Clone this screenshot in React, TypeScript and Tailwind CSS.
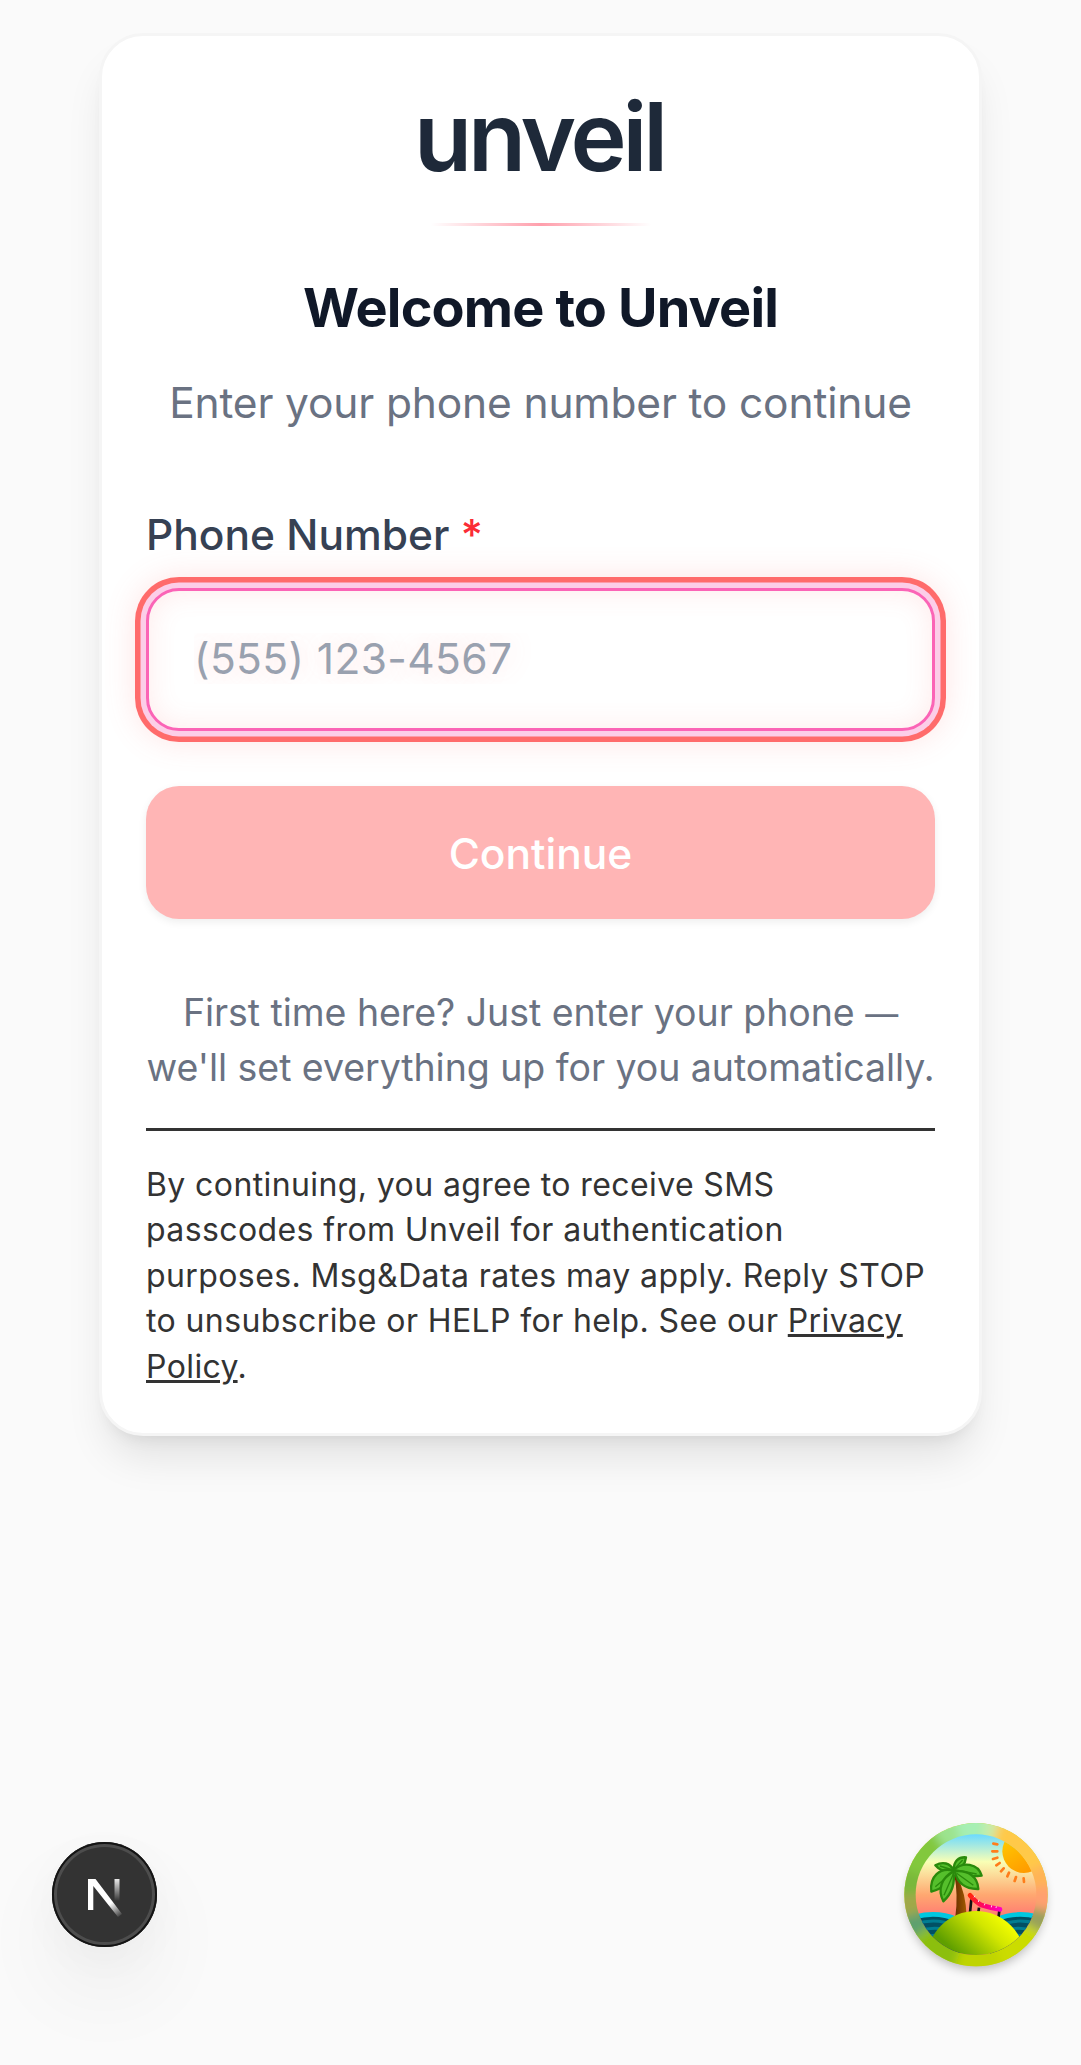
import React from 'react';

function NextBadge() {
  return (
    <div className="absolute top-[1842px] left-[52px] flex h-[105px] w-[105px] items-center justify-center rounded-full bg-[#333] shadow-[inset_0_0_0_2px_#141414,inset_0_0_0_5px_#4d4d4d,0_44px_88px_rgba(0,0,0,0.06),0_11px_44px_rgba(0,0,0,0.03)]">
      <svg className="h-[44px] w-[36px]" viewBox="0 0 36 44" fill="none">
        <defs>
          <linearGradient id="stem" x1="0" y1="6" x2="0" y2="28" gradientUnits="userSpaceOnUse">
            <stop stopColor="#fff" stopOpacity="0.9" />
            <stop offset="1" stopColor="#fff" stopOpacity="0" />
          </linearGradient>
          <linearGradient id="diag" x1="24" y1="30" x2="34" y2="44" gradientUnits="userSpaceOnUse">
            <stop stopColor="#fff" />
            <stop offset="1" stopColor="#fff" stopOpacity="0" />
          </linearGradient>
        </defs>
        <path d="M27.500 6h5v22h-5z" fill="url(#stem)" />
        <path d="M1 6h7.500L35 41l-4 3L6.300 13v24H1z" fill="url(#diag)" />
      </svg>
    </div>
  );
}

function PalmBadge() {
  return (
    <svg className="absolute top-[1810px] left-[890px] h-[170px] w-[170px] overflow-visible" viewBox="0 0 510 510" fill="none">
      <defs>
        <clipPath id="scene"><circle cx="258" cy="254" r="181" /></clipPath>
        <clipPath id="outer"><circle cx="258" cy="254" r="215" /></clipPath>
        <filter id="soft" x="-30%" y="-30%" width="160%" height="160%"><feGaussianBlur stdDeviation="15" /></filter>
        <filter id="drop" x="-30%" y="-30%" width="160%" height="160%"><feGaussianBlur stdDeviation="16" /></filter>
        <linearGradient id="sky" x1="0" y1="73" x2="0" y2="330" gradientUnits="userSpaceOnUse">
          <stop stopColor="#6bdaff" />
          <stop offset="0.32" stopColor="#f9ffb5" />
          <stop offset="0.71" stopColor="#ffa770" />
          <stop offset="1" stopColor="#ff7373" />
        </linearGradient>
        <linearGradient id="isle" x1="330" y1="310" x2="210" y2="440" gradientUnits="userSpaceOnUse">
          <stop stopColor="#f5ff00" />
          <stop offset="0.35" stopColor="#d2e600" />
          <stop offset="1" stopColor="#5f9f00" />
        </linearGradient>
        <linearGradient id="trunk" x1="195" y1="0" x2="230" y2="0" gradientUnits="userSpaceOnUse">
          <stop stopColor="#6a3000" />
          <stop offset="1" stopColor="#a35b00" />
        </linearGradient>
        <linearGradient id="sun" x1="360" y1="90" x2="420" y2="190" gradientUnits="userSpaceOnUse">
          <stop stopColor="#ffc400" />
          <stop offset="1" stopColor="#ff9800" />
        </linearGradient>
        <linearGradient id="chair" x1="235" y1="250" x2="335" y2="300" gradientUnits="userSpaceOnUse">
          <stop stopColor="#ff2a00" />
          <stop offset="0.6" stopColor="#ff0078" />
          <stop offset="1" stopColor="#ff00c8" />
        </linearGradient>
      </defs>
      <circle cx="258" cy="272" r="206" fill="#000" opacity="0.28" filter="url(#drop)" />
      <g clipPath="url(#outer)">
        <rect width="510" height="510" fill="#c8d820" />
        <g filter="url(#soft)">
          <path d="M258 254 130 -40H300z" fill="#a6efb4" />
          <path d="M258 254 290 -40H400z" fill="#c6ecaa" />
          <path d="M258 254 345 -20 560 60v100z" fill="#ffc94a" />
          <path d="M258 254 560 120v170z" fill="#ffb457" />
          <path d="M258 254 560 220v120z" fill="#ffa070" />
          <path d="M258 254 560 325v130z" fill="#98a05c" />
          <path d="M258 254 560 430 300 560z" fill="#cbdc00" />
          <path d="M258 254 370 560H130z" fill="#bfd400" />
          <path d="M258 254 170 560-20 450z" fill="#8cbf10" />
          <path d="M258 254-40 460v-120z" fill="#5ba070" />
          <path d="M258 254-40 350v-110z" fill="#a0a848" />
          <path d="M258 254-40 250V110z" fill="#79b83a" />
          <path d="M258 254-40 150 90-40z" fill="#82c83e" />
          <path d="M258 254 70 -20H180z" fill="#9ce38e" />
        </g>
      </g>
      <g clipPath="url(#scene)">
        <rect x="70" y="70" width="380" height="380" fill="url(#sky)" />
        <circle cx="402" cy="124" r="65" fill="url(#sun)" />
        <path d="m310 101 12 2M307 124h15M309 147l13-4M319 166l10-7M333 184l8-9M352 199l5-11M374 213l4-12M402 216l-1-11" stroke="#ff7d1a" strokeWidth="8" strokeLinecap="round" />
        <path d="M60 325q72-30 150 5v120H60zM450 325q-72-30-150 5v120h150z" fill="#015064" />
        <path d="M70 322q70-20 130 6M450 322q-70-20-130 6" stroke="#00c8e0" strokeWidth="14" />
        <path d="M75 342q65-20 120 6M445 342q-65-20-120 6M85 362q65-18 105 8M435 362q-65-18-105 8M95 382q55-16 95 8M425 382q-55-16-95 8" stroke="#007d92" strokeWidth="9" />
        <path d="M193 195q12 60 3 125h34q-2-70-30-125z" fill="url(#trunk)" />
        <g fill="#55bf2c" stroke="#2a8a0c" strokeWidth="7" strokeLinejoin="round">
          <path d="M192 180c-2-26 14-40 36-38-2 20-14 34-36 38z" />
          <path d="M192 182c-12-24-34-28-56-16 14 17 32 21 56 16z" />
          <path d="M192 180c26-26 72-20 83 17-34 4-66-1-83-17z" />
          <path d="M190 182c-40-12-72 18-66 63 36-10 58-32 66-63z" />
          <path d="M190 184c-36 20-48 54-30 90 26-24 36-54 30-90z" />
          <path d="M194 184c8 34 32 54 71 53-2-36-30-58-71-53z" />
        </g>
        <path d="m194 176 24-26M188 180l-38-12M198 180l62 12M186 188l-50 42M190 192l-28 64M200 190l50 36" stroke="#2a8a0c" strokeWidth="4" />
        <path d="m244 268-4 40M267 293l-2 14M328 302l-3 24" stroke="#111" strokeWidth="8" />
        <path d="M240 256q18 22 36 30 24 8 54 12" stroke="url(#chair)" strokeWidth="14" strokeLinecap="round" />
        <path d="m252 262 3-5M265 276l2-7M283 286l2-6M304 292l1-6M318 294l1-5" stroke="#ffd0e8" strokeWidth="3" />
        <circle cx="258" cy="451" r="148" fill="url(#isle)" />
      </g>
    </svg>
  );
}

export default function App() {
  return (
    <div className="relative h-[2065px] w-[1081px] overflow-hidden bg-[#fafafa] pt-[33px] font-['Inter',sans-serif]">
      <main className="mx-auto flex h-[1403px] w-[883px] flex-col rounded-[44px] border-[3px] border-[#f5f5f5] bg-white px-[44px] shadow-[0_28px_41px_-8px_rgba(0,0,0,0.1),0_11px_17px_-11px_rgba(0,0,0,0.1)]">
        <h1 className="mt-[51px] pr-[3px] text-center text-[95px] leading-[100px] font-semibold tracking-[-4.1px] text-[#1e2939]">unveil</h1>
        <div className="mt-[36px] h-[3px] w-[220px] self-center bg-linear-to-r from-transparent via-[#ff9fac] to-transparent" />
        <h2 className="mt-[49px] text-center text-[54px] leading-[66px] font-bold tracking-[-0.86px] text-[#101828]">Welcome to Unveil</h2>
        <p className="mt-[29px] text-center text-[42.5px] leading-[66px] tracking-[-0.16px] whitespace-nowrap text-[#6a7282]">Enter your phone number to continue</p>
        <label htmlFor="phone" className="mt-[69px] text-[42.5px] leading-[60px] font-medium text-[#364153]">
          Phone Number <span className="text-[#fb2c36]">*</span>
        </label>
        <input
          id="phone"
          type="tel"
          placeholder="(555) 123-4567"
          className="mt-[23px] h-[143px] w-full rounded-[33px] border-[3px] border-[#fb64b6] bg-white px-[45px] pb-[2px] text-[42.5px] tracking-[0.38px] shadow-[0_0_0_5.5px_#fccee8,0_0_0_11px_#ff6b6b,0_0_33px_9px_rgba(255,107,107,0.2),inset_0_0_28px_rgba(255,107,107,0.14)] outline-none [text-shadow:0_0_28px_rgba(255,107,107,0.22)] placeholder:text-[#99a1af]"
        />
        <button className="mt-[55px] h-[133px] w-full shrink-0 rounded-[33px] bg-[#ffb5b5] pt-[2px] text-[42.5px] font-medium text-white shadow-[0_3px_8px_rgba(0,0,0,0.07)]">Continue</button>
        <p className="mt-[66px] text-center text-[37.5px] leading-[55px] tracking-[-0.05px] whitespace-nowrap text-[#6a7282]">
          First time here? Just enter your phone <span className="text-[33px] leading-none">—</span><br />we'll set everything up for you automatically.
        </p>
        <hr className="mt-[33px] h-[3px] shrink-0 border-0 bg-[#333]" />
        <p className="mt-[31px] text-[32px] leading-[45.4px] tracking-[0.4px] whitespace-nowrap text-[#333]">
          By continuing, you agree to receive SMS<br />
          passcodes from Unveil for authentication<br />
          purposes. Msg&amp;Data rates may apply. Reply STOP<br />
          to unsubscribe or HELP for help. See our <a className="underline">Privacy</a><br />
          <a className="underline">Policy</a>.
        </p>
      </main>
      <NextBadge />
      <PalmBadge />
    </div>
  );
}
